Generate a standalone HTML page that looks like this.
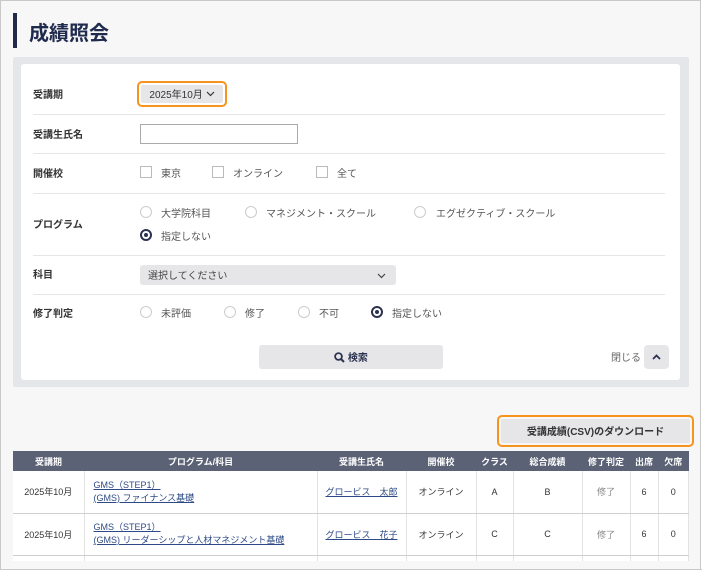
<!DOCTYPE html>
<html><head><meta charset="utf-8"><style>
*{box-sizing:border-box;margin:0;padding:0}
html,body{width:702px;height:570px;overflow:hidden}
body{background:#fff;font-family:"Liberation Sans","Noto Sans CJK JP",sans-serif;color:#333;position:relative}
.a{position:absolute}
.frame{left:0;top:0;width:701px;height:569px;border:1px solid #c9c9c9;background:#f7f7f7}
.lbl{font-size:10px;font-weight:bold;color:#333;left:33px}
.line{left:33px;width:632px;height:1px;background:#e6e6e6}
.t{font-size:10px;color:#555;white-space:nowrap}
.cb{width:12px;height:12px;border:1px solid #bbb;background:#fff}
.rd{width:12px;height:12px;border:1px solid #ccc;border-radius:50%;background:#fff}
.rd.on{border:2px solid #2c3350}
.rd.on::after{content:"";position:absolute;left:2px;top:2px;width:4px;height:4px;border-radius:50%;background:#2c3350}
.btn{display:flex;align-items:center;justify-content:center;background:#e6e6e9;height:100%;border-radius:2px;padding-bottom:2px}
table{border-collapse:collapse;font-size:9px}
th{background:#5b6275;color:#fff;font-weight:bold;height:20px;text-align:center}
td{border-right:1px solid #e3e3e3;border-bottom:1px solid #cfcfcf;text-align:center;background:#fff;color:#333}
td.l{text-align:left;padding-left:9px;line-height:13px}
a{color:#2d4a86;text-decoration:underline}
</style></head><body>
<div class="a frame"></div>
<div class="a" style="left:13px;top:13px;width:4px;height:35px;background:#1f2a4d"></div>
<div class="a" style="left:29px;top:17px;font-size:20px;font-weight:bold;color:#1f2a4d">成績照会</div>

<div class="a" style="left:13px;top:57px;width:676px;height:330px;background:#e4e6e9;border-radius:2px"></div>
<div class="a" style="left:21px;top:64px;width:659px;height:316px;background:#fff;border-radius:3px"></div>

<div class="a lbl" style="top:86px">受講期</div>
<div class="a" style="left:137px;top:81px;width:90px;height:26px;border:2px solid #f7941d;border-radius:5px;padding:2px">
 <div class="btn" style="font-size:10px;color:#333">2025年10月&nbsp;<svg width="9" height="6" style="margin-top:2px"><path d="M1 1L4.5 4.5L8 1" fill="none" stroke="#333" stroke-width="1.2"/></svg></div></div>
<div class="a line" style="top:114px"></div>

<div class="a lbl" style="top:126px">受講生氏名</div>
<div class="a" style="left:140px;top:124px;width:158px;height:20px;border:1px solid #aaa"></div>
<div class="a line" style="top:153px"></div>

<div class="a lbl" style="top:165px">開催校</div>
<div class="a cb" style="left:140px;top:166px"></div><div class="a t" style="left:161px;top:165px">東京</div>
<div class="a cb" style="left:212px;top:166px"></div><div class="a t" style="left:233px;top:165px">オンライン</div>
<div class="a cb" style="left:316px;top:166px"></div><div class="a t" style="left:337px;top:165px">全て</div>
<div class="a line" style="top:193px"></div>

<div class="a lbl" style="top:216px">プログラム</div>
<div class="a rd" style="left:140px;top:206px"></div><div class="a t" style="left:161px;top:205px">大学院科目</div>
<div class="a rd" style="left:245px;top:206px"></div><div class="a t" style="left:266px;top:205px">マネジメント・スクール</div>
<div class="a rd" style="left:414px;top:206px"></div><div class="a t" style="left:436px;top:205px">エグゼクティブ・スクール</div>
<div class="a rd on" style="left:140px;top:229px"></div><div class="a t" style="left:161px;top:228px">指定しない</div>
<div class="a line" style="top:255px"></div>

<div class="a lbl" style="top:266px">科目</div>
<div class="a" style="left:140px;top:265px;width:256px;height:20px;background:#e6e6e9;border-radius:3px;font-size:10px;color:#444;padding:2px 0 0 8px">選択してください<svg class="a" style="right:10px;top:8px" width="9" height="6"><path d="M1 1L4.5 4.5L8 1" fill="none" stroke="#444" stroke-width="1.2"/></svg></div>
<div class="a line" style="top:294px"></div>

<div class="a lbl" style="top:305px">修了判定</div>
<div class="a rd" style="left:140px;top:306px"></div><div class="a t" style="left:161px;top:305px">未評価</div>
<div class="a rd" style="left:224px;top:306px"></div><div class="a t" style="left:245px;top:305px">修了</div>
<div class="a rd" style="left:298px;top:306px"></div><div class="a t" style="left:319px;top:305px">不可</div>
<div class="a rd on" style="left:371px;top:306px"></div><div class="a t" style="left:392px;top:305px">指定しない</div>

<div class="a" style="left:259px;top:345px;width:184px;height:24px;border-radius:3px;font-size:10px;font-weight:bold;color:#2c3350">
<div class="btn" style="border-radius:3px"><svg width="11" height="11" viewBox="0 0 11 11" style="margin-top:2px"><circle cx="4.5" cy="4.5" r="3.4" fill="none" stroke="#2c3350" stroke-width="1.8"/><path d="M7 7L10 10" stroke="#2c3350" stroke-width="2"/></svg>&nbsp;検索</div></div>
<div class="a t" style="left:611px;top:349px;color:#666">閉じる</div>
<div class="a" style="left:644px;top:345px;width:25px;height:24px;background:#e6e6e9;border-radius:4px"><svg width="25" height="24"><path d="M9 14L12.5 10.5L16 14" fill="none" stroke="#2c3350" stroke-width="1.8"/></svg></div>

<div class="a" style="left:497px;top:415px;width:197px;height:32px;border:2px solid #f7941d;border-radius:5px;padding:2px">
<div class="btn" style="font-size:10px;font-weight:bold;color:#333">受講成績(CSV)のダウンロード</div></div>

<table class="a" style="left:13px;top:451px;width:676px">
<tr><th style="width:71px">受講期</th><th style="width:233px">プログラム/科目</th><th style="width:89px">受講生氏名</th><th style="width:70px">開催校</th><th style="width:37px">クラス</th><th style="width:69px">総合成績</th><th style="width:48px">修了判定</th><th style="width:28px">出席</th><th>欠席</th></tr>
<tr style="height:42px"><td>2025年10月</td><td class="l"><a>GMS（STEP1）</a><br><a>(GMS) ファイナンス基礎</a></td><td><a>グロービス　太郎</a></td><td>オンライン</td><td>A</td><td>B</td><td style="color:#888">修了</td><td>6</td><td>0</td></tr>
<tr style="height:42px"><td>2025年10月</td><td class="l"><a>GMS（STEP1）</a><br><a>(GMS) リーダーシップと人材マネジメント基礎</a></td><td><a>グロービス　花子</a></td><td>オンライン</td><td>C</td><td>C</td><td style="color:#888">修了</td><td>6</td><td>0</td></tr>
<tr style="height:20px"><td></td><td></td><td></td><td></td><td></td><td></td><td></td><td></td><td></td></tr>
</table>
<div class="a" style="left:1px;top:561px;width:699px;height:8px;background:#f7f7f7"></div>
<div class="a" style="left:0;top:569px;width:702px;height:1px;background:#c9c9c9"></div>
</body></html>
